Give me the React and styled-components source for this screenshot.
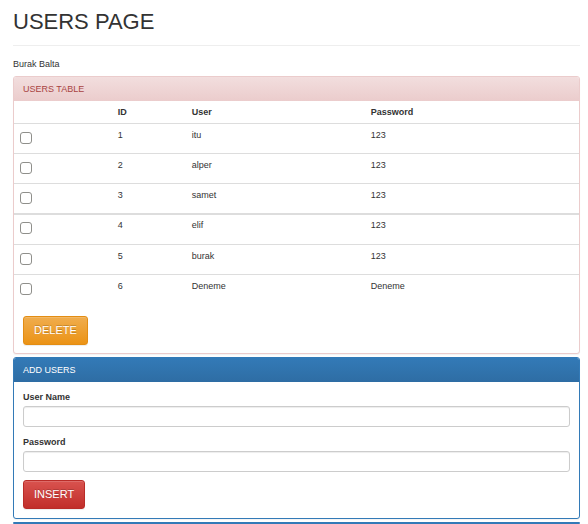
import React from "react";
import styled, { createGlobalStyle, css } from "styled-components";

const GlobalStyle = createGlobalStyle`
  *, *::before, *::after { box-sizing: border-box; }
  body {
    margin: 0;
    background: #fff;
    color: #333;
    font-family: "Liberation Sans", Arial, Helvetica, sans-serif;
    font-size: 9px;
    line-height: 13px;
  }
`;

const Page = styled.main`
  padding: 9px 8px 0 13px;
`;

const PageHeader = styled.header`
  padding-bottom: 10px;
  margin-bottom: 12px;
  border-bottom: 1px solid #eee;
`;

const Title = styled.h1`
  margin: 0;
  font-size: 22px;
  font-weight: 400;
  line-height: 26px;
`;

const Owner = styled.p`
  margin: 0 0 5px;
`;

const tones = {
  danger: css`
    --edge: #ebcccc;
    --heading-text: #a94442;
    --heading-top: #f2dede;
    --heading-bottom: #ebcccc;
  `,
  primary: css`
    --edge: #337ab7;
    --heading-text: #fff;
    --heading-top: #337ab7;
    --heading-bottom: #2e6da4;
  `,
};

const Panel = styled.section`
  ${({ $tone }) => tones[$tone]}
  margin-bottom: 3px;
  border: 1px solid var(--edge);
  border-radius: 3px;
  background: #fff;
  box-shadow: 0 1px 1px rgba(0, 0, 0, 0.05);
`;

const PanelHeading = styled.h2`
  margin: 0;
  padding: 6px 9px 5px;
  border-radius: 2px 2px 0 0;
  color: var(--heading-text);
  background: linear-gradient(to bottom, var(--heading-top), var(--heading-bottom));
  font-size: 9px;
  font-weight: 400;
  line-height: 13px;
`;

const PanelBody = styled.div`
  padding: 9px;
`;

const PanelEdge = styled(Panel)`
  border-width: 2px 0 0;
  margin: 0;
`;

const Table = styled.table`
  width: 100%;
  border-collapse: separate;
  border-spacing: 0;
  table-layout: fixed;
`;

const HeadCell = styled.th`
  width: ${({ $width }) => $width || "auto"};
  padding: 5px 6px 4px;
  text-align: left;
`;

const Cell = styled.td`
  height: 30px;
  padding: 5px 6px 0;
  border-top: 1px solid #ddd;
  vertical-align: top;
`;

const Row = styled.tr`
  ${({ $divided }) =>
    $divided &&
    css`
      & > ${Cell} {
        height: 31px;
        padding-top: 4px;
        border-top-width: 2px;
      }
    `}
`;

const Checkbox = styled.input`
  appearance: none;
  display: block;
  width: 12px;
  height: 12px;
  margin: 3px 0 0;
  border: 1px solid #8f8f8b;
  border-radius: 3px;
  background: #fff;

  &:checked {
    background: #337ab7;
  }
`;

const buttonTones = {
  warning: css`
    border-color: #e38d13;
    background: linear-gradient(to bottom, #f0ad4e, #eb9316);
  `,
  danger: css`
    border-color: #b92c28;
    background: linear-gradient(to bottom, #d9534f, #c12e2a);
  `,
};

const Button = styled.button`
  display: block;
  padding: 6px 10px;
  border: 1px solid;
  border-radius: 3px;
  color: #fff;
  font-family: inherit;
  font-size: 11px;
  line-height: 15px;
  text-shadow: 0 -1px 0 rgba(0, 0, 0, 0.2);
  box-shadow: inset 0 1px 0 rgba(255, 255, 255, 0.15), 0 1px 1px rgba(0, 0, 0, 0.075);
  cursor: pointer;
  ${({ $tone }) => buttonTones[$tone]}
`;

const TableActions = styled.div`
  padding: 12px 9px 8px;
`;

const Field = styled.div`
  margin-bottom: 9px;

  &:last-of-type {
    margin-bottom: 8px;
  }
`;

const Label = styled.label`
  display: block;
  margin-bottom: 2px;
  font-weight: 700;
`;

const TextInput = styled.input`
  display: block;
  width: 100%;
  height: 21px;
  padding: 3px 7px;
  border: 1px solid #ccc;
  border-radius: 3px;
  color: #555;
  font: inherit;
  box-shadow: inset 0 1px 1px rgba(0, 0, 0, 0.075);
`;

const users = [
  { id: 1, name: "itu", password: "123" },
  { id: 2, name: "alper", password: "123" },
  { id: 3, name: "samet", password: "123" },
  { id: 4, name: "elif", password: "123", divided: true },
  { id: 5, name: "burak", password: "123" },
  { id: 6, name: "Deneme", password: "Deneme" },
];

export default function App() {
  return (
    <>
      <GlobalStyle />
      <Page>
        <PageHeader>
          <Title>USERS PAGE</Title>
        </PageHeader>
        <Owner>Burak Balta</Owner>

        <Panel $tone="danger">
          <PanelHeading>USERS TABLE</PanelHeading>
          <Table>
            <thead>
              <tr>
                <HeadCell as="td" $width="17.3%" />
                <HeadCell scope="col" $width="13.1%">ID</HeadCell>
                <HeadCell scope="col" $width="31.7%">User</HeadCell>
                <HeadCell scope="col">Password</HeadCell>
              </tr>
            </thead>
            <tbody>
              {users.map((user) => (
                <Row key={user.id} $divided={user.divided}>
                  <Cell>
                    <Checkbox type="checkbox" aria-label={`Select ${user.name}`} />
                  </Cell>
                  <Cell>{user.id}</Cell>
                  <Cell>{user.name}</Cell>
                  <Cell>{user.password}</Cell>
                </Row>
              ))}
            </tbody>
          </Table>
          <TableActions>
            <Button type="button" $tone="warning">DELETE</Button>
          </TableActions>
        </Panel>

        <Panel $tone="primary">
          <PanelHeading>ADD USERS</PanelHeading>
          <PanelBody as="form" onSubmit={(event) => event.preventDefault()}>
            <Field>
              <Label htmlFor="user-name">User Name</Label>
              <TextInput id="user-name" type="text" />
            </Field>
            <Field>
              <Label htmlFor="password">Password</Label>
              <TextInput id="password" type="text" />
            </Field>
            <Button type="submit" $tone="danger">INSERT</Button>
          </PanelBody>
        </Panel>

        <PanelEdge $tone="primary" />
      </Page>
    </>
  );
}
